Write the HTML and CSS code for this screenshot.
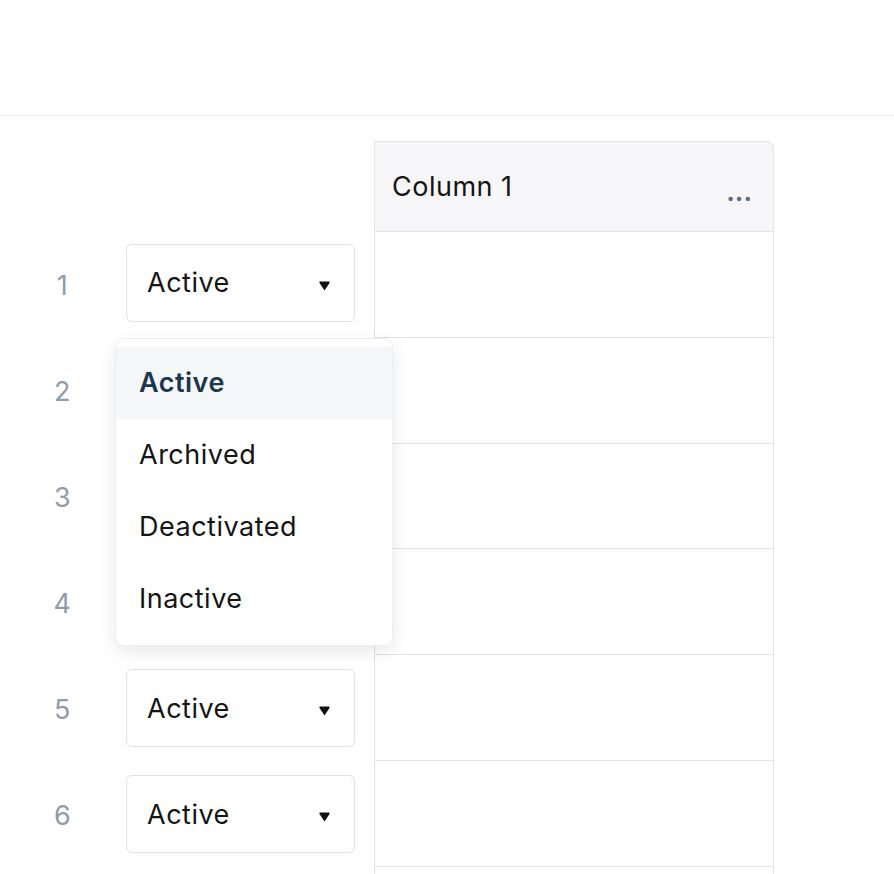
FILE: index.html
```html
<!DOCTYPE html>
<html lang="en">
<head>
    <meta charset="UTF-8">
    <meta name="viewport" content="width=device-width, initial-scale=1.0">
    <title>Status column</title>
    <link rel="stylesheet" href="styles.css">
</head>
<body>
<div class="topbar"></div>

<div class="sheet">
    <!-- header row -->
    <div class="cell-num"></div>
    <div class="cell-status"></div>
    <div class="col-head">
        <span>Column 1</span>
        <span class="more">...</span>
    </div>

    <!-- 1 -->
    <div class="cell-num">1</div>
    <div class="cell-status first">
        <div class="select open">
            <span>Active</span>
            <svg class="caret" width="11" height="10" viewBox="0 0 11 10"><path d="M0.5 0.5h10v1.6L5.5 9.5 0.5 2.1z" fill="#111"/></svg>
            <ul class="menu">
                <li class="selected">Active</li>
                <li>Archived</li>
                <li>Deactivated</li>
                <li>Inactive</li>
            </ul>
        </div>
    </div>
    <div class="cell"></div>

    <!-- 2 -->
    <div class="cell-num">2</div>
    <div class="cell-status">
        <div class="select">
            <span>Active</span>
            <svg class="caret" width="11" height="10" viewBox="0 0 11 10"><path d="M0.5 0.5h10v1.6L5.5 9.5 0.5 2.1z" fill="#111"/></svg>
        </div>
    </div>
    <div class="cell"></div>

    <!-- 3 -->
    <div class="cell-num">3</div>
    <div class="cell-status">
        <div class="select">
            <span>Active</span>
            <svg class="caret" width="11" height="10" viewBox="0 0 11 10"><path d="M0.5 0.5h10v1.6L5.5 9.5 0.5 2.1z" fill="#111"/></svg>
        </div>
    </div>
    <div class="cell"></div>

    <!-- 4 -->
    <div class="cell-num">4</div>
    <div class="cell-status">
        <div class="select">
            <span>Active</span>
            <svg class="caret" width="11" height="10" viewBox="0 0 11 10"><path d="M0.5 0.5h10v1.6L5.5 9.5 0.5 2.1z" fill="#111"/></svg>
        </div>
    </div>
    <div class="cell"></div>

    <!-- 5 -->
    <div class="cell-num">5</div>
    <div class="cell-status">
        <div class="select">
            <span>Active</span>
            <svg class="caret" width="11" height="10" viewBox="0 0 11 10"><path d="M0.5 0.5h10v1.6L5.5 9.5 0.5 2.1z" fill="#111"/></svg>
        </div>
    </div>
    <div class="cell"></div>

    <!-- 6 -->
    <div class="cell-num">6</div>
    <div class="cell-status">
        <div class="select">
            <span>Active</span>
            <svg class="caret" width="11" height="10" viewBox="0 0 11 10"><path d="M0.5 0.5h10v1.6L5.5 9.5 0.5 2.1z" fill="#111"/></svg>
        </div>
    </div>
    <div class="cell"></div>

    <!-- 7 -->
    <div class="cell-num"></div>
    <div class="cell-status"></div>
    <div class="cell"></div>
</div>
</body>
</html>
```

FILE: styles.css
```css
*{
    margin: 0;
    padding: 0;
    box-sizing: border-box;
}
html,body{
    width: 100%;
    height: 100%;
    overflow: hidden;
}
body{
    font-family: Inter, "Noto Sans", sans-serif;
    font-size: 27px;
    letter-spacing: 0.5px;
    color: #151515;
    background: #fff;
}
.topbar{
    height: 116px;
    border-bottom: 1px solid #ececee;
}
.sheet{
    display: grid;
    grid-template-columns: 125px 249px 400px;
    grid-template-rows: 91px repeat(7, 105.83px);
    margin-top: 25px;
}
.cell-num{
    display: flex;
    align-items: center;
    justify-content: center;
    color: #8e9cab;
    padding-top: 2px;
}
.cell-status{
    display: flex;
    align-items: center;
    padding-left: 1px;
}
.cell-status.first{
    padding-bottom: 4px;
}
.col-head{
    display: flex;
    align-items: center;
    justify-content: space-between;
    padding: 0 21px 0 17px;
    background: #f6f6f8;
    border: 1px solid #e3e3e7;
    border-top-right-radius: 7px;
}
.col-head .more{
    color: #5c6c7c;
    font-weight: 600;
    letter-spacing: 0;
    padding-top: 10px;
}
.cell{
    border-left: 1px solid #e3e3e7;
    border-right: 1px solid #e3e3e7;
    border-bottom: 1px solid #e3e3e7;
}
.select{
    position: relative;
    width: 229px;
    height: 78px;
    display: flex;
    align-items: center;
    justify-content: space-between;
    padding: 0 24px 0 20px;
    border: 1px solid #e2e2e6;
    border-radius: 6px;
    background: #fff;
}
.caret{
    margin-top: 6px;
}
.menu{
    position: absolute;
    left: -12px;
    top: calc(100% + 17px);
    width: 278px;
    padding: 8px 0 10px;
    list-style: none;
    background: #fff;
    border: 1px solid #efeff2;
    border-radius: 9px;
    box-shadow: 0 6px 18px rgba(0, 0, 0, 0.09);
    z-index: 5;
}
.menu li{
    height: 72px;
    line-height: 72px;
    padding-left: 23px;
}
.menu li.selected{
    background: #f5f6f8;
    color: #1d3650;
    font-weight: 600;
}
```
